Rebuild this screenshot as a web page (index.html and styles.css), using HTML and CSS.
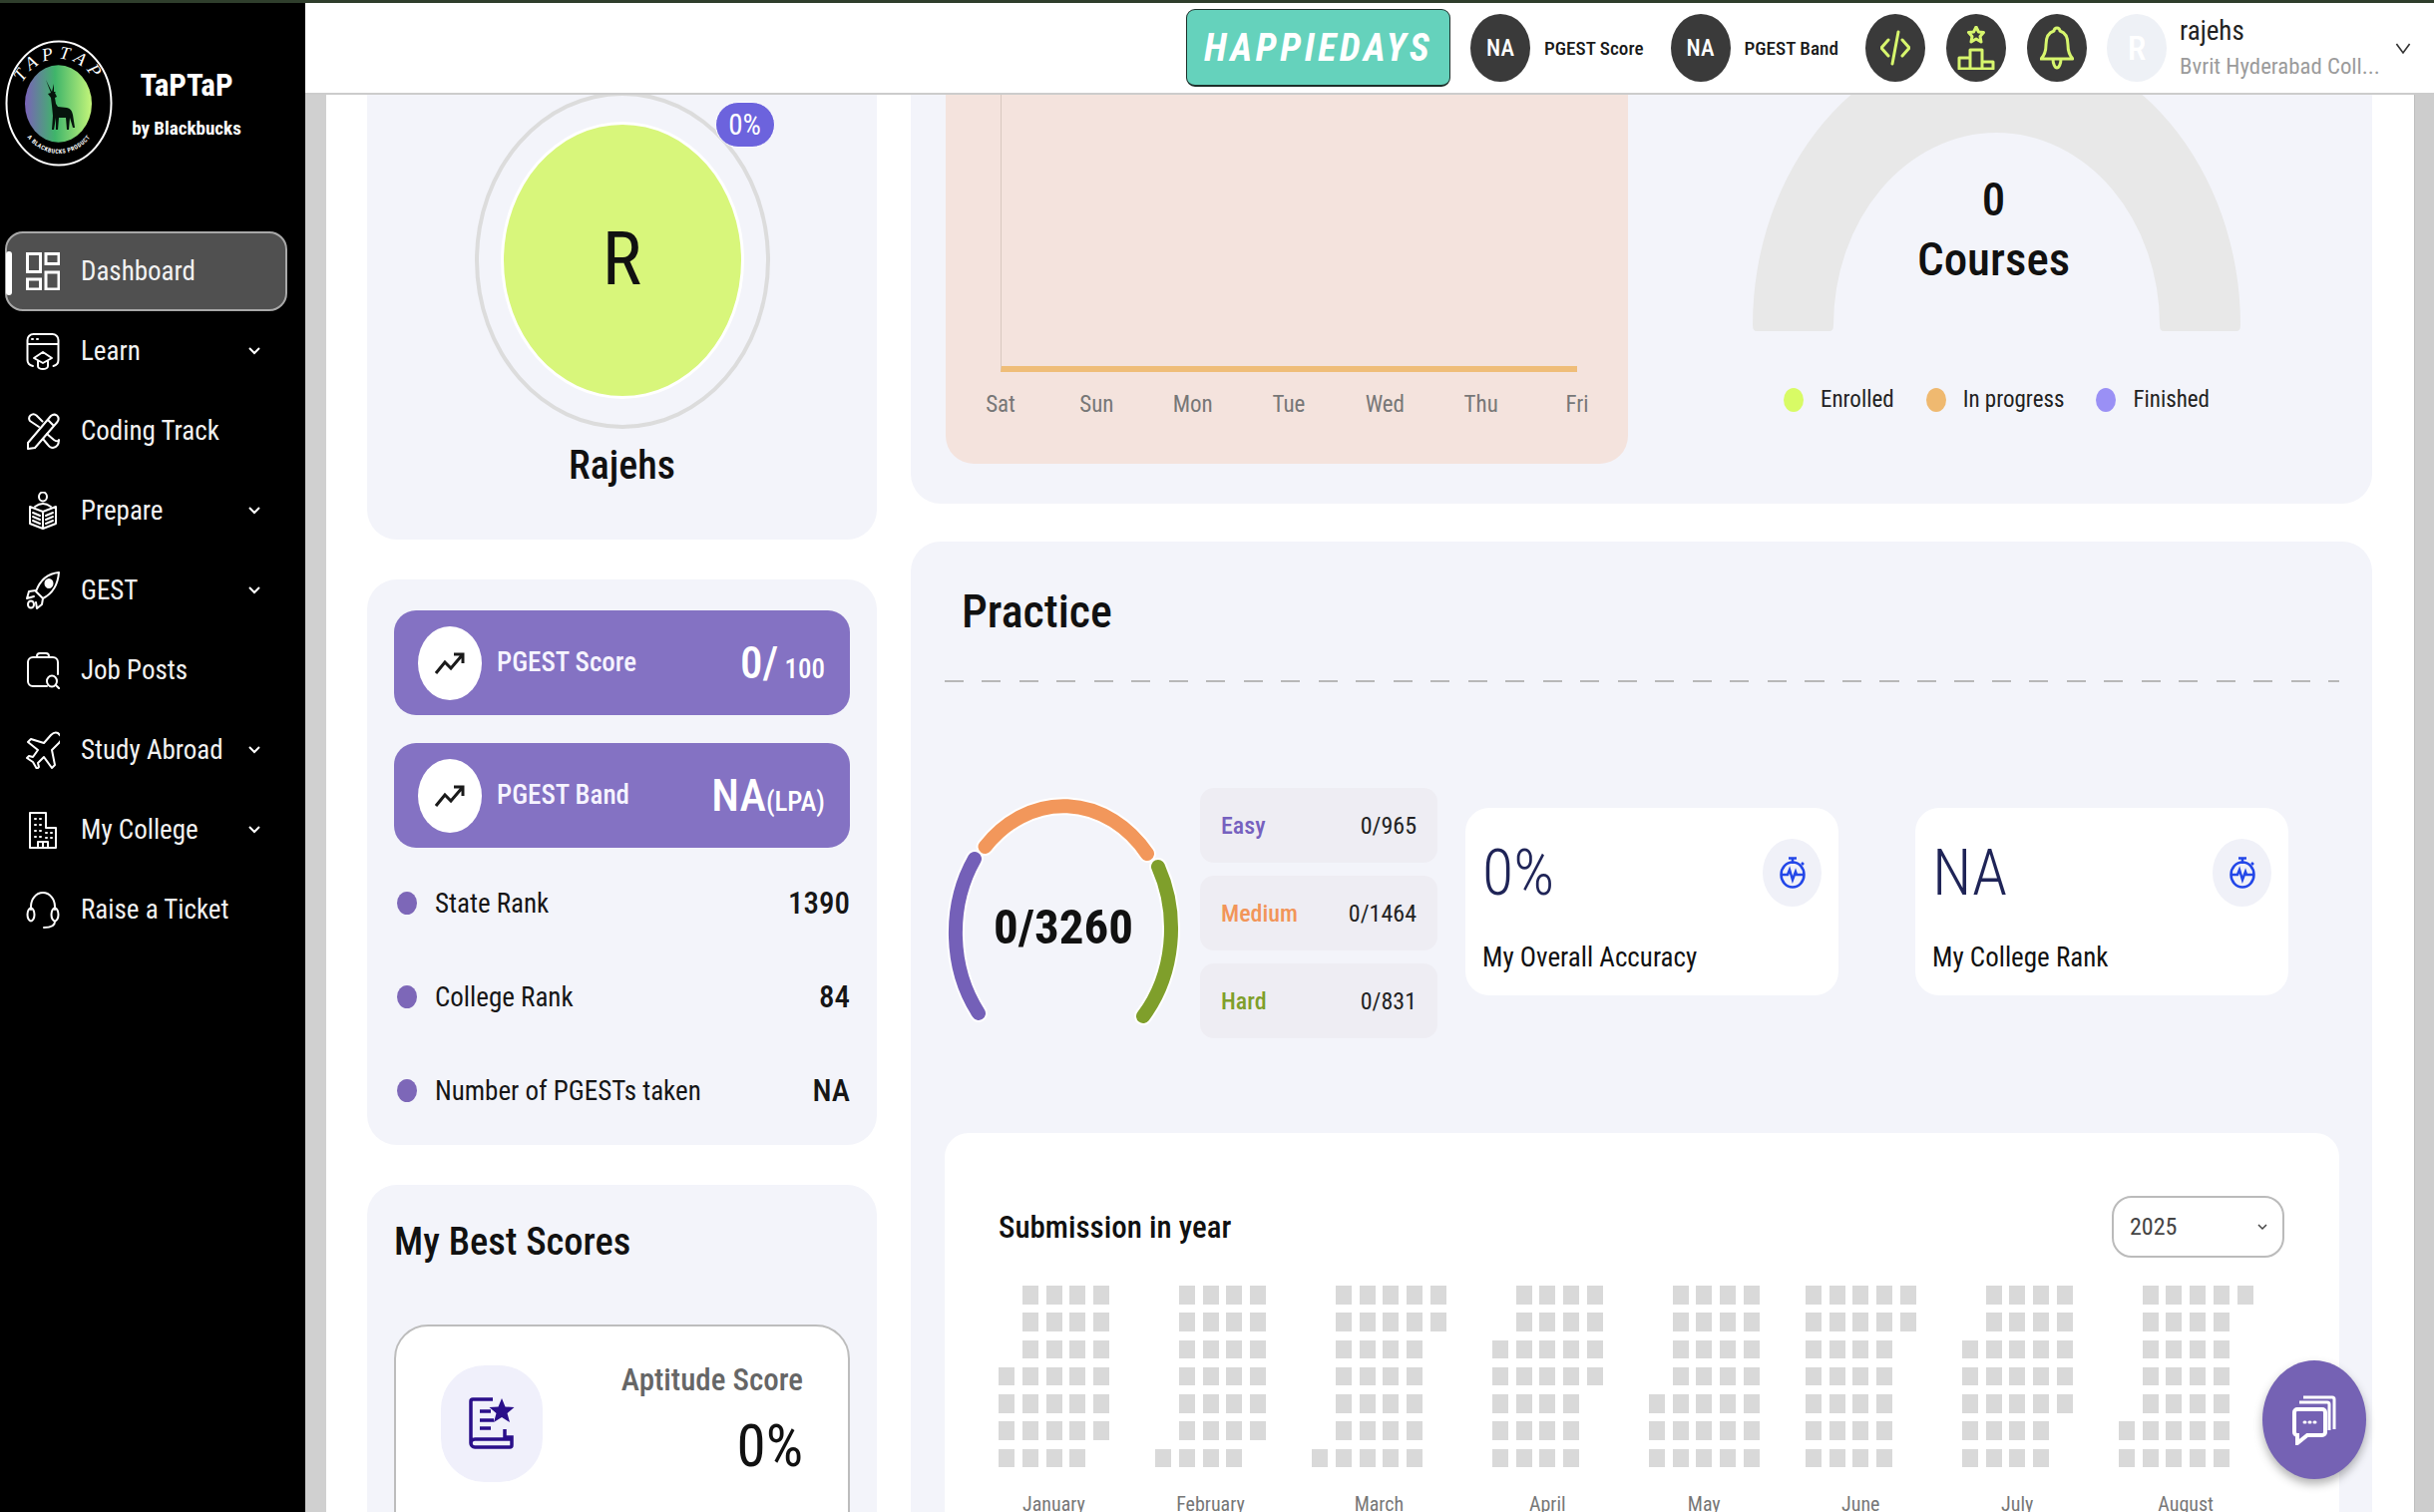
FILE: index.html
```html
<!DOCTYPE html>
<html lang="en">
<head>
    <meta charset="UTF-8">
    <title>TaPTaP Dashboard</title>
    <link rel="stylesheet" href="styles.css">
</head>
<body>
    <div class="top-strip"></div>
    <div class="app">

        <aside class="sidebar">
            <div class="brand">
                <svg class="brand-logo" viewBox="0 0 108 127">
                    <defs>
                        <linearGradient id="logoGrad" x1="0" y1="0" x2="1" y2="0">
                            <stop offset="0" stop-color="#7a62b8"/>
                            <stop offset="0.45" stop-color="#3fb56a"/>
                            <stop offset="1" stop-color="#c4f57a"/>
                        </linearGradient>
                        <path id="logoTop" d="M13 64A41 45 0 0 1 95 64"/>
                        <path id="logoBottom" d="M11 63A43 51 0 0 0 97 63"/>
                    </defs>
                    <ellipse cx="54" cy="63.500" rx="52.500" ry="62" fill="none" stroke="#fff" stroke-width="2"/>
                    <ellipse cx="53.500" cy="64" rx="33.500" ry="38.700" fill="url(#logoGrad)"/>
                    <path d="M41 40L46 50 47 52 49 44 49 52 51 52 50 53 52 57 50 58 51 64 53 67 62 68Q67 69 68 75L70 88 68 88 65 78 64 90 62 90 61 78 54 78 53 90 51 90 51 78 49 90 47 90 48 76 47 66 46 58 43 54 46 53 44 48Z" fill="#06140c"/>
                    <text class="logo-top" fill="#fff"><textPath href="#logoTop" startOffset="50%" text-anchor="middle">TAPTAP</textPath></text>
                    <text class="logo-bottom" fill="#fff"><textPath href="#logoBottom" startOffset="50%" text-anchor="middle">A BLACKBUCKS PRODUCT</textPath></text>
                </svg>
                <div class="brand-text">
                    <div class="brand-name">TaPTaP</div>
                    <div class="brand-by">by Blackbucks</div>
                </div>
            </div>

            <nav class="nav">
                <a class="nav-item active">
                    <svg class="nav-icon thick" viewBox="0 0 34 38"><rect x="1.500" y="1.500" width="13" height="18"/><rect x="20" y="1.500" width="13" height="10"/><rect x="1.500" y="27" width="13" height="10"/><rect x="20" y="20" width="13" height="17"/></svg>
                    <span>Dashboard</span>
                </a>
                <a class="nav-item">
                    <svg class="nav-icon" viewBox="0 0 34 38"><path d="M7 34C3 33 1.500 31 1.500 28V8a6 6 0 0 1 6-6h19a6 6 0 0 1 6 6v20c0 3-1 5-5 6M1.500 12H32.500"/><path d="M6 7h1M11 7h1"/><path d="M17 20L8 26l9 5 9-5zM12 29v5a5 3 0 0 0 10 0v-5"/></svg>
                    <span>Learn</span>
                    <svg class="chev" viewBox="0 0 12 8"><path d="M1 1l5 5 5-5"/></svg>
                </a>
                <a class="nav-item">
                    <svg class="nav-icon" viewBox="0 0 34 38"><path d="M2 31L25 4q3-2.500 6-.5 3 3 .5 6.500L9 36l-7 1zM22 8l6 6"/><path d="M13 15L4 9q-2-3 .5-5.500 3-2.500 6 0l6 6M21 22l7 6q3 2 5 1M33 28q0 7-6 8-3 0-5-3l-5-6"/></svg>
                    <span>Coding Track</span>
                </a>
                <a class="nav-item">
                    <svg class="nav-icon" viewBox="0 0 34 38"><ellipse cx="17" cy="5" rx="4" ry="4.500"/><path d="M9 15q8-6 16 0"/><path d="M4 15l13 5 13-5v17l-13 5-13-5zM17 20v17"/><path d="M7 21l7 3M7 25l7 3M7 29l7 3M20 24l7-3M20 28l7-3M20 32l7-3"/></svg>
                    <span>Prepare</span>
                    <svg class="chev" viewBox="0 0 12 8"><path d="M1 1l5 5 5-5"/></svg>
                </a>
                <a class="nav-item">
                    <svg class="nav-icon" viewBox="0 0 34 38"><path d="M33 1C22 2 14 9 10 20l7 7c10-5 15-14 16-26z"/><ellipse class="solid" cx="23" cy="12" rx="3.500" ry="4"/><path d="M10 19l-7 1-2 7 7-2M17 27l-1 6-5 4-1-6"/><ellipse cx="5" cy="33" rx="3" ry="3.500"/></svg>
                    <span>GEST</span>
                    <svg class="chev" viewBox="0 0 12 8"><path d="M1 1l5 5 5-5"/></svg>
                </a>
                <a class="nav-item">
                    <svg class="nav-icon" viewBox="0 0 34 38"><path d="M11 6V5a3 3 0 0 1 3-3h6a3 3 0 0 1 3 3v1M21 35H7a5 5 0 0 1-5-5V11a5 5 0 0 1 5-5h20a5 5 0 0 1 5 5v12"/><ellipse cx="26" cy="30" rx="5" ry="5.500"/><path d="M30 34l4 4"/></svg>
                    <span>Job Posts</span>
                </a>
                <a class="nav-item">
                    <svg class="nav-icon" viewBox="0 0 34 38"><path d="M32 2c-2-1-5 0-7 2l-7 8L5 8l-3 3 10 8-5 7-4-1-2 2 6 4 4 7 2-2-1-4 6-6 8 11 3-3-3-15 7-7c2-2 3-5 2-7z"/></svg>
                    <span>Study Abroad</span>
                    <svg class="chev" viewBox="0 0 12 8"><path d="M1 1l5 5 5-5"/></svg>
                </a>
                <a class="nav-item">
                    <svg class="nav-icon" viewBox="0 0 34 38"><path d="M4 37V2h16v15h10v20zM4 37h26"/><path d="M9 8h1M14 8h1M9 14h1M14 14h1M9 20h1M14 20h1M20 22h1M25 22h1M9 26h1M14 26h1M20 27h1M25 27h1"/><path d="M12 37v-6h10v6M17 31v6"/></svg>
                    <span>My College</span>
                    <svg class="chev" viewBox="0 0 12 8"><path d="M1 1l5 5 5-5"/></svg>
                </a>
                <a class="nav-item">
                    <svg class="nav-icon" viewBox="0 0 34 38"><path d="M5 19v-3a12 14 0 0 1 24 0v3"/><ellipse cx="5" cy="24" rx="3.500" ry="6.500"/><ellipse cx="29" cy="24" rx="3.500" ry="6.500"/><path d="M29 31c0 4-4 6-11 6"/></svg>
                    <span>Raise a Ticket</span>
                </a>
            </nav>
        </aside>

        <div class="right-side">
            <header class="topbar">
                <div class="happie">HAPPIEDAYS</div>
                <div class="top-stat"><div class="top-circle">NA</div><span>PGEST Score</span></div>
                <div class="top-stat"><div class="top-circle">NA</div><span>PGEST Band</span></div>
                <div class="top-icons">
                    <div class="top-circle">
                        <svg class="lime-icon" width="30" height="38" viewBox="0 0 30 38"><path d="M8 11L1 19l7 8M22 11l7 8-7 8M18 3l-6 32"/></svg>
                    </div>
                    <div class="top-circle">
                        <svg class="lime-icon" width="38" height="44" viewBox="0 0 38 44"><path d="M19 1l2.500 5 5 .5-3.500 4 1 5.500-5-3-5 3 1-5.500-3.500-4 5-.5zM13 24h12v19H13zM13 32H2v11h34V36H25"/></svg>
                    </div>
                    <div class="top-circle">
                        <svg class="lime-icon" width="34" height="44" viewBox="0 0 34 44"><path d="M17 2a3 3 0 0 1 3 3c7 2 8 8 8 14 0 8 2 11 5 14H1c3-3 5-6 5-14 0-6 1-12 8-14a3 3 0 0 1 3-3zM13 33c0 5 2 9 4 9s4-4 4-9"/></svg>
                    </div>
                </div>
                <div class="user-avatar">R</div>
                <div class="user-info">
                    <div class="user-name">rajehs</div>
                    <div class="user-college">Bvrit Hyderabad Coll...</div>
                </div>
                <svg class="user-chev" viewBox="0 0 14 10"><path d="M1 1l6 8 6-8"/></svg>
            </header>

            <div class="main">
                <div class="gutter"></div>
                <div class="content">
                    <div class="scroll">

                        <div class="left-col">
                            <section class="card profile-card">
                                <div class="avatar-ring">
                                    <div class="avatar">R</div>
                                    <div class="avatar-badge">0%</div>
                                </div>
                                <div class="profile-name">Rajehs</div>
                            </section>

                            <section class="card score-card">
                                <div class="score-row">
                                    <div class="score-circle"><svg class="trend" viewBox="0 0 30 22"><path d="M1 21L10 10l6 6L28 2M19 2h9v9"/></svg></div>
                                    <span class="score-label">PGEST Score</span>
                                    <span class="score-value">0/<small>&nbsp;100</small></span>
                                </div>
                                <div class="score-row">
                                    <div class="score-circle"><svg class="trend" viewBox="0 0 30 22"><path d="M1 21L10 10l6 6L28 2M19 2h9v9"/></svg></div>
                                    <span class="score-label">PGEST Band</span>
                                    <span class="score-value">NA<small>(LPA)</small></span>
                                </div>
                                <ul class="rank-list">
                                    <li><i></i><span>State Rank</span><b>1390</b></li>
                                    <li><i></i><span>College Rank</span><b>84</b></li>
                                    <li><i></i><span>Number of PGESTs taken</span><b>NA</b></li>
                                </ul>
                            </section>

                            <section class="card best-card">
                                <h3>My Best Scores</h3>
                                <div class="best-item">
                                    <div class="best-icon">
                                        <svg width="46" height="52" viewBox="0 0 46 52"><path class="doc" d="M24 2H4a2 2 0 0 0-2 2v42a4 4 0 0 0 4 4h35a2 2 0 0 0 2-2V40H36V32M2 46a4 4 0 0 1 4-4h37"/><path class="doc" d="M11 14h11M11 23h14M11 31h11"/><path class="star" d="M33 1l3.500 8.500 9 .5-7 6 2.500 9-8-5-8 5 2.500-9-7-6 9-.5z"/></svg>
                                    </div>
                                    <div class="best-text">
                                        <div class="best-label">Aptitude Score</div>
                                        <div class="best-value">0%</div>
                                    </div>
                                </div>
                            </section>
                        </div>

                        <div class="right-col">
                            <section class="panel top-panel">
                                <div class="week-chart">
                                    <div class="plot"></div>
                                    <div class="days">
                                        <span>Sat</span><span>Sun</span><span>Mon</span><span>Tue</span><span>Wed</span><span>Thu</span><span>Fri</span>
                                    </div>
                                </div>
                                <div class="courses">
                                    <div class="courses-gauge">
                                        <svg width="489" height="332" viewBox="0 0 489 332"><path d="M0 326A244.500 288 0 0 1 489 326Q489 332 485 332H412Q408 332 408 326A163.500 193 0 0 0 81 326Q81 332 77 332H4Q0 332 0 326Z" fill="#e8e8e8"/></svg>
                                        <div class="courses-text"><b>0</b><b>Courses</b></div>
                                    </div>
                                    <div class="legend">
                                        <span><i class="dot-lime"></i>Enrolled</span>
                                        <span><i class="dot-orange"></i>In progress</span>
                                        <span><i class="dot-violet"></i>Finished</span>
                                    </div>
                                </div>
                            </section>

                            <section class="panel practice-panel">
                                <h2>Practice</h2>
                                <div class="dashes"></div>
                                <div class="practice-row">
                                    <div class="arc-gauge">
                                        <svg width="250" height="260" viewBox="0 0 250 260">
                                            <g class="arc-halo">
                                                <path d="M34 226A108.500 131 0 0 1 30 71"/>
                                                <path d="M40.500 59A108.500 131 0 0 1 203 66"/>
                                                <path d="M214 79A108.500 131 0 0 1 199 229"/>
                                            </g>
                                            <g class="arc-line">
                                                <path stroke="#7460b8" d="M34 226A108.500 131 0 0 1 30 71"/>
                                                <path stroke="#f2975b" d="M40.500 59A108.500 131 0 0 1 203 66"/>
                                                <path stroke="#7f9f2b" d="M214 79A108.500 131 0 0 1 199 229"/>
                                            </g>
                                        </svg>
                                        <div class="arc-text">0/3260</div>
                                    </div>
                                    <div class="levels">
                                        <div class="level"><span class="easy">Easy</span><span>0/965</span></div>
                                        <div class="level"><span class="medium">Medium</span><span>0/1464</span></div>
                                        <div class="level"><span class="hard">Hard</span><span>0/831</span></div>
                                    </div>
                                    <div class="stat-card">
                                        <div class="stat-top">
                                            <div class="stat-value">0%</div>
                                            <div class="stat-icon"><svg class="watch" width="26" height="32" viewBox="0 0 26 32"><path d="M9 1.500h8M13 2v5"/><ellipse cx="13" cy="18" rx="11.500" ry="12.500"/><path d="M2 18h6l2-5 3 10 3-8 1 3h7M22 6l2 2"/></svg></div>
                                        </div>
                                        <div class="stat-label">My Overall Accuracy</div>
                                    </div>
                                    <div class="stat-card">
                                        <div class="stat-top">
                                            <div class="stat-value">NA</div>
                                            <div class="stat-icon"><svg class="watch" width="26" height="32" viewBox="0 0 26 32"><path d="M9 1.500h8M13 2v5"/><ellipse cx="13" cy="18" rx="11.500" ry="12.500"/><path d="M2 18h6l2-5 3 10 3-8 1 3h7M22 6l2 2"/></svg></div>
                                        </div>
                                        <div class="stat-label">My College Rank</div>
                                    </div>
                                </div>

                                <div class="submissions">
                                    <div class="sub-head">
                                        <h4>Submission in year</h4>
                                        <div class="year-select">2025<svg viewBox="0 0 12 8"><path d="M2 2l4 4 4-4"/></svg></div>
                                    </div>
                                    <div class="heatmap" id="heatmap"></div>
                                </div>
                            </section>
                        </div>

                    </div>
                </div>
                <div class="scrollbar"></div>
            </div>
        </div>
    </div>

    <button class="chat-btn">
        <svg width="44" height="50" viewBox="0 0 44 50"><path class="chat-back" d="M11 2h29a2 2 0 0 1 2 2v30"/><path class="chat-back" d="M7 7h28a2 2 0 0 1 2 2v26"/><path class="chat-front" d="M5 14h25a3 3 0 0 1 3 3v20a3 3 0 0 1-3 3H15L5 48v-8H5a3 3 0 0 1-3-3V17a3 3 0 0 1 3-3z"/><path class="chat-dots" d="M12 27h1M17 27h1M22 27h1"/></svg>
    </button>

    <script src="heatmap.js"></script>
</body>
</html>
```

FILE: styles.css
```css
* {
    box-sizing: border-box;
}

html, body {
    margin: 0;
    height: 1516px;
    overflow: hidden;
}

body {
    font-family: Roboto, 'Liberation Sans', sans-serif;
    font-stretch: 87%;
    color: #111;
    background-color: white;
    position: relative;
}

.top-strip {
    height: 3px;
    background-color: #2f3e2c;
}

.app {
    display: flex;
    height: 1513px;
}

/* sidebar */
.sidebar {
    width: 306px;
    flex-shrink: 0;
    background-color: black;
    color: white;
}

.brand {
    display: flex;
    align-items: center;
    padding: 37px 0 0 5px;
}

.brand-logo {
    width: 108px;
    height: 127px;
}

.logo-top {
    font-family: 'Liberation Serif', serif;
    font-style: italic;
    font-size: 18px;
    letter-spacing: 5px;
}

.logo-bottom {
    font-size: 6px;
    font-weight: 700;
    letter-spacing: .5px;
}

.brand-text {
    width: 110px;
    margin-left: 19px;
    padding-top: 2px;
    text-align: center;
}

.brand-name {
    font-size: 31px;
    font-weight: 700;
    line-height: 34px;
}

.brand-by {
    margin-top: 14px;
    font-size: 19px;
    font-weight: 700;
    line-height: 24px;
    white-space: nowrap;
}

.nav {
    margin-top: 65px;
    padding: 0 18px 0 5px;
}

.nav-item {
    display: flex;
    align-items: center;
    height: 80px;
    padding-left: 21px;
    font-size: 27px;
    color: #f2f2f2;
    position: relative;
}

.nav-item.active {
    background-color: #505050;
    border: 2px solid #a8a8a8;
    border-radius: 18px;
    padding-left: 19px;
}

.nav-item.active::before {
    content: "";
    position: absolute;
    left: -1px;
    top: 18px;
    width: 6px;
    height: 44px;
    border-radius: 3px;
    background-color: white;
}

.nav-icon {
    width: 34px;
    height: 38px;
    margin-right: 21px;
    flex-shrink: 0;
    fill: none;
    stroke: white;
    stroke-width: 2;
    stroke-linecap: round;
    stroke-linejoin: round;
}

.nav-icon.thick {
    stroke-width: 3;
    stroke-linecap: butt;
    stroke-linejoin: miter;
}

.nav-icon .solid {
    fill: white;
}

.chev {
    width: 12px;
    height: 8px;
    margin-left: auto;
    margin-right: 27px;
    fill: none;
    stroke: white;
    stroke-width: 2;
}

/* top bar */
.right-side {
    flex: 1;
    min-width: 0;
    display: flex;
    flex-direction: column;
}

.topbar {
    height: 92px;
    flex-shrink: 0;
    display: flex;
    align-items: center;
    padding-left: 883px;
    background-color: white;
    border-bottom: 2px solid #cccccc;
    position: relative;
    z-index: 2;
}

.happie {
    width: 265px;
    height: 78px;
    margin-top: -1px;
    padding-top: 2px;
    display: flex;
    align-items: center;
    justify-content: center;
    background-color: #65d2bc;
    border: 1px solid #1d2f2a;
    border-bottom-width: 2px;
    border-radius: 9px;
    color: white;
    font-size: 38px;
    font-weight: 700;
    font-style: italic;
    letter-spacing: 3.500px;
}

.top-stat {
    display: flex;
    align-items: center;
    margin-left: 20px;
    font-size: 19.200px;
    font-weight: 500;
    color: #1a1a1a;
}

.top-stat + .top-stat {
    margin-left: 27px;
}

.top-stat span {
    margin-left: 14px;
    white-space: nowrap;
}

.top-circle {
    width: 60px;
    height: 68px;
    flex-shrink: 0;
    border-radius: 50%;
    display: flex;
    align-items: center;
    justify-content: center;
    background-color: #3a3a3a;
    color: white;
    font-size: 23px;
}

.top-icons {
    display: flex;
    gap: 21px;
    margin-left: 27px;
}

.lime-icon {
    fill: none;
    stroke: #d7f66d;
    stroke-width: 3;
    stroke-linecap: round;
    stroke-linejoin: round;
}

.user-avatar {
    width: 60px;
    height: 68px;
    margin-left: 20px;
    border-radius: 50%;
    display: flex;
    align-items: center;
    justify-content: center;
    background-color: #eef1f6;
    color: white;
    font-size: 34px;
    font-weight: 500;
}

.user-info {
    margin-left: 13px;
    white-space: nowrap;
}

.user-name {
    font-size: 27px;
    line-height: 32px;
    color: #222;
}

.user-college {
    margin-top: 5px;
    font-size: 22.800px;
    line-height: 30px;
    color: #9b9b9b;
}

.user-chev {
    width: 16px;
    height: 11px;
    margin-left: 15px;
    fill: none;
    stroke: #333;
    stroke-width: 1.500;
}

/* main area, already scrolled down a bit so the cards start under the top bar */
.main {
    flex: 1;
    min-height: 0;
    display: flex;
}

.gutter {
    width: 21px;
    background-color: #d0d0d0;
}

.scrollbar {
    width: 20px;
    background-color: #cdcdcd;
    border-left: 1px solid #bdbdbd;
}

.content {
    flex: 1;
    min-width: 0;
    overflow: hidden;
}

.scroll {
    display: flex;
    gap: 34px;
    margin-top: -95px;
    padding-left: 41px;
}

.left-col {
    width: 511px;
    flex-shrink: 0;
    display: flex;
    flex-direction: column;
    gap: 40px;
}

.right-col {
    width: 1465px;
    flex-shrink: 0;
    display: flex;
    flex-direction: column;
    gap: 38px;
}

.card, .panel {
    background-color: #f3f4fa;
    border-radius: 30px;
}

.profile-card {
    height: 541px;
    padding-top: 92px;
    display: flex;
    flex-direction: column;
    align-items: center;
}

.avatar-ring {
    width: 296px;
    height: 338px;
    border: 4px solid #dcdcdc;
    border-radius: 50%;
    display: flex;
    align-items: center;
    justify-content: center;
    position: relative;
}

.avatar {
    width: 244px;
    height: 278px;
    border-radius: 50%;
    border: 3px solid white;
    background-color: #d8f67b;
    display: flex;
    align-items: center;
    justify-content: center;
    font-size: 74px;
    font-weight: 420;
    padding-bottom: 4px;
}

.avatar-badge {
    position: absolute;
    left: 237px;
    top: 6px;
    width: 60px;
    height: 46px;
    border: 1px solid white;
    border-radius: 23px;
    background-color: #6c63dd;
    color: white;
    font-size: 29px;
    display: flex;
    align-items: center;
    justify-content: center;
}

.profile-name {
    margin-top: 16px;
    font-size: 40px;
    font-weight: 500;
    line-height: 42px;
}

.score-card {
    padding: 31px 27px 7px;
}

.score-row {
    height: 105px;
    margin-bottom: 28px;
    padding: 0 25px 0 24px;
    display: flex;
    align-items: center;
    background-color: #8472c3;
    border-radius: 22px;
    color: white;
}

.score-circle {
    width: 64px;
    height: 74px;
    border-radius: 50%;
    background-color: white;
    display: flex;
    align-items: center;
    justify-content: center;
}

.trend {
    width: 30px;
    height: 22px;
    fill: none;
    stroke: #1a1a1a;
    stroke-width: 3;
}

.score-label {
    margin-left: 15px;
    margin-top: -2px;
    font-size: 27px;
    font-weight: 500;
    color: #f6f4ff;
}

.score-value {
    margin-left: auto;
    font-size: 45px;
    font-weight: 500;
    white-space: nowrap;
}

.score-value small {
    font-size: 27px;
}

.rank-list {
    list-style: none;
    margin: -19.500px 0 0;
    padding: 0;
}

.rank-list li {
    height: 94px;
    display: flex;
    align-items: center;
    font-size: 27px;
    color: #161616;
}

.rank-list i {
    width: 20px;
    height: 23px;
    margin: 0 18px 0 3px;
    border-radius: 50%;
    background-color: #7d67b8;
}

.rank-list b {
    margin-left: auto;
    font-weight: 500;
    font-size: 31px;
}

.best-card {
    padding: 37px 27px 0;
    height: 400px;
}

.best-card h3 {
    margin: 0;
    font-size: 38.500px;
    font-weight: 500;
    line-height: 40px;
}

.best-item {
    height: 230px;
    margin-top: 63px;
    padding: 39px 45px 0 45px;
    display: flex;
    justify-content: space-between;
    background-color: white;
    border: 2px solid #bdbdbd;
    border-radius: 34px;
}

.best-icon {
    width: 102px;
    height: 117px;
    border-radius: 44px;
    background-color: #f0f0fb;
    display: flex;
    align-items: center;
    justify-content: center;
}

.doc {
    fill: none;
    stroke: #2a0f8a;
    stroke-width: 3.500;
}

.star {
    fill: #2a0f8a;
}

.best-text {
    text-align: right;
}

.best-label {
    margin-top: -3px;
    font-size: 31px;
    font-weight: 500;
    line-height: 36px;
    color: #666;
}

.best-value {
    margin-top: 13px;
    font-size: 59px;
    line-height: 70px;
}

/* this week chart and courses gauge */
.top-panel {
    height: 505px;
    display: flex;
    padding-left: 35px;
}

.week-chart {
    width: 684px;
    height: 465px;
    flex-shrink: 0;
    padding: 95px 51px 45px 55px;
    display: flex;
    flex-direction: column;
    background-color: #f4e3dd;
    border-radius: 0 0 28px 28px;
}

.plot {
    flex: 1;
    border-left: 1px solid #d8c8c0;
    border-bottom: 6px solid #efbd78;
}

.days {
    display: flex;
    justify-content: space-between;
    margin-top: 19px;
    font-size: 23px;
    line-height: 28px;
    color: #777;
}

.days span {
    width: 0;
    display: flex;
    justify-content: center;
}

.courses {
    flex: 1;
    display: flex;
    flex-direction: column;
    align-items: center;
    padding-right: 7px;
}

.courses-gauge {
    height: 332px;
    position: relative;
}

.courses-gauge svg {
    display: block;
}

.courses-text {
    position: absolute;
    left: 0;
    right: 6px;
    top: 172px;
    display: flex;
    flex-direction: column;
    align-items: center;
    font-size: 47px;
    line-height: 56px;
}

.courses-text b {
    font-weight: 500;
}

.courses-text b + b {
    margin-top: 4px;
}

.legend {
    display: flex;
    gap: 32px;
    margin-top: 55px;
    font-size: 23px;
    line-height: 28px;
    color: #222;
}

.legend span {
    display: flex;
    align-items: center;
    white-space: nowrap;
}

.legend i {
    width: 20px;
    height: 24px;
    margin-right: 17px;
    border-radius: 50%;
}

.dot-lime { background-color: #d8fb65; }
.dot-orange { background-color: #efb970; }
.dot-violet { background-color: #9a90f5; }

/* practice */
.practice-panel {
    padding: 48px 33px 60px 34px;
}

.practice-panel h2 {
    margin: 0 0 0 17px;
    font-size: 46px;
    font-weight: 500;
    line-height: 44px;
}

.dashes {
    height: 2px;
    margin-top: 47px;
    background-image: repeating-linear-gradient(to right, #b8b8b8 0, #b8b8b8 19px, transparent 19px, transparent 37.500px);
}

.practice-row {
    display: flex;
    align-items: flex-start;
    margin-top: 106px;
}

.arc-gauge {
    position: relative;
    width: 250px;
    height: 260px;
}

.arc-gauge svg {
    display: block;
}

.arc-halo path, .arc-line path {
    fill: none;
    stroke-linecap: round;
}

.arc-halo path {
    stroke: white;
    stroke-width: 18;
}

.arc-line path {
    stroke-width: 14;
}

.arc-text {
    position: absolute;
    left: 0;
    width: 238px;
    top: 110px;
    text-align: center;
    font-size: 49px;
    font-weight: 700;
    line-height: 60px;
}

.levels {
    width: 238px;
    margin-left: 6px;
    display: flex;
    flex-direction: column;
    gap: 13px;
}

.level {
    height: 75px;
    padding: 0 21px;
    display: flex;
    align-items: center;
    justify-content: space-between;
    background-color: #eeedf3;
    border-radius: 14px;
    font-size: 24px;
    color: #222;
}

.easy, .medium, .hard {
    font-weight: 500;
}

.easy { color: #7661bf; }
.medium { color: #f29559; }
.hard { color: #7f9f2b; }

.stat-card {
    width: 374px;
    height: 188px;
    margin: 20px 0 0 28px;
    padding: 32px 17px 0;
    background-color: white;
    border-radius: 24px;
}

.stat-card + .stat-card {
    margin-left: 77px;
}

.stat-top {
    display: flex;
    justify-content: space-between;
    height: 68px;
}

.stat-value {
    font-size: 64px;
    line-height: 68px;
    font-weight: 350;
    color: #1f2457;
}

.stat-icon {
    width: 59px;
    height: 68px;
    margin-top: -1px;
    border-radius: 50%;
    background-color: #f0f1f8;
    display: flex;
    align-items: center;
    justify-content: center;
}

.watch {
    fill: none;
    stroke: #2347e8;
    stroke-width: 2.500;
}

.stat-label {
    margin-top: 33px;
    font-size: 27px;
    line-height: 34px;
    color: #111;
}

.submissions {
    margin-top: 86px;
    padding: 63px 55px 30px 54px;
    background-color: white;
    border-radius: 24px;
}

.sub-head {
    display: flex;
    align-items: center;
    justify-content: space-between;
}

.sub-head h4 {
    margin: 0;
    font-size: 31px;
    font-weight: 500;
}

.year-select {
    width: 173px;
    height: 62px;
    padding: 0 14px 0 16px;
    display: flex;
    align-items: center;
    justify-content: space-between;
    border: 2px solid #bbb;
    border-radius: 20px;
    font-size: 24px;
    color: #444;
}

.year-select svg {
    width: 12px;
    height: 8px;
    fill: none;
    stroke: #444;
    stroke-width: 1.500;
}

.heatmap {
    display: flex;
    gap: 46px;
    margin-top: 28px;
}

.month-grid {
    display: flex;
    gap: 7.750px;
    height: 182.600px;
}

.week {
    width: 16px;
    display: flex;
    flex-direction: column;
    gap: 8.800px;
}

.week i {
    display: block;
    height: 18.500px;
    background-color: #d9d9d9;
}

.week i.vazio {
    background-color: transparent;
}

.month-name {
    margin-top: 27px;
    text-align: center;
    font-size: 20px;
    line-height: 18px;
    color: #777;
}

/* floating chat button */
.chat-btn {
    position: absolute;
    left: 2268px;
    top: 1364px;
    width: 104px;
    height: 119px;
    padding: 0;
    border: none;
    border-radius: 50%;
    background-color: #7562b4;
    box-shadow: 0 5px 10px rgba(0, 0, 0, .3);
    display: flex;
    align-items: center;
    justify-content: center;
}

.chat-back {
    fill: none;
    stroke: white;
    stroke-width: 3;
}

.chat-front {
    fill: #7562b4;
    stroke: white;
    stroke-width: 4;
}

.chat-dots {
    fill: none;
    stroke: white;
    stroke-width: 3;
    stroke-linecap: round;
}
```

FILE: heatmap.js
```js
// for every month: first row and last row of each week column
const meses = [
    { nome: "January", semanas: [[3, 6], [0, 6], [0, 6], [0, 6], [0, 5]] },
    { nome: "February", semanas: [[6, 6], [0, 6], [0, 6], [0, 6], [0, 5]] },
    { nome: "March", semanas: [[6, 6], [0, 6], [0, 6], [0, 6], [0, 6], [0, 1]] },
    { nome: "April", semanas: [[2, 6], [0, 6], [0, 6], [0, 6], [0, 3]] },
    { nome: "May", semanas: [[4, 6], [0, 6], [0, 6], [0, 6], [0, 6]] },
    { nome: "June", semanas: [[0, 6], [0, 6], [0, 6], [0, 6], [0, 1]] },
    { nome: "July", semanas: [[2, 6], [0, 6], [0, 6], [0, 6], [0, 4]] },
    { nome: "August", semanas: [[5, 6], [0, 6], [0, 6], [0, 6], [0, 6], [0, 0]] }
];

let html = "";
for (const mes of meses) {
    let colunas = "";
    for (const [inicio, fim] of mes.semanas) {
        let celulas = "";
        for (let linha = 0; linha < 7; linha++) {
            celulas += linha >= inicio && linha <= fim ? "<i></i>" : '<i class="vazio"></i>';
        }
        colunas += `<div class="week">${celulas}</div>`;
    }
    html += `<div class="month"><div class="month-grid">${colunas}</div><div class="month-name">${mes.nome}</div></div>`;
}
document.getElementById("heatmap").innerHTML = html;
```
